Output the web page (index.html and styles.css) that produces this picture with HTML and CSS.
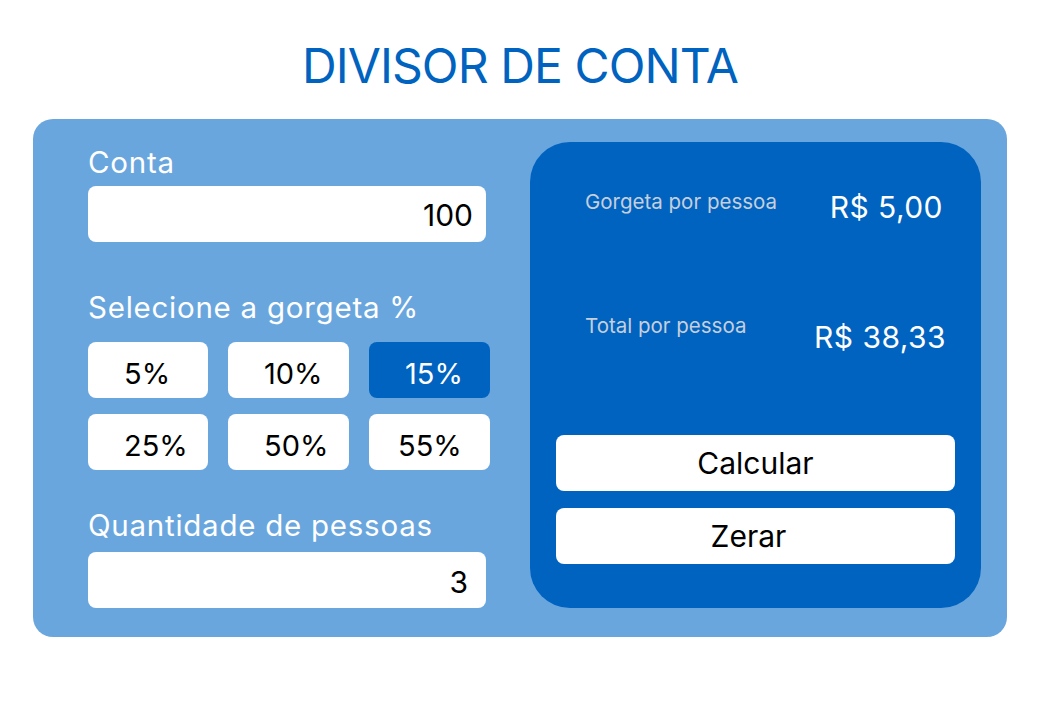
FILE: index.html
```html
<!DOCTYPE html>
<html lang="pt-BR">
<head>
<meta charset="utf-8">
<title>Divisor de Conta</title>
<link rel="stylesheet" href="styles.css">
</head>
<body>
<h1 class="title">DIVISOR DE CONTA</h1>
<main class="card">
  <section class="form">
    <label class="label label-conta">Conta</label>
    <div class="input">100</div>
    <label class="label label-tip">Selecione a gorgeta %</label>
    <div class="tips">
      <button class="tip">5%</button>
      <button class="tip">10%</button>
      <button class="tip tip-active">15%</button>
      <button class="tip">25%</button>
      <button class="tip">50%</button>
      <button class="tip tip-last">55%</button>
    </div>
    <label class="label label-people">Quantidade de pessoas</label>
    <div class="input input-people">3</div>
  </section>
  <section class="result">
    <div class="row row-tip">
      <span class="row-label">Gorgeta por pessoa</span>
      <span class="row-value">R$ 5,00</span>
    </div>
    <div class="row row-total">
      <span class="row-label">Total por pessoa</span>
      <span class="row-value">R$ 38,33</span>
    </div>
    <button class="action action-calc">Calcular</button>
    <button class="action action-reset">Zerar</button>
  </section>
</main>
</body>
</html>
```

FILE: styles.css
```css
* { box-sizing: border-box; }
html, body { margin: 0; padding: 0; background: #ffffff; }
body {
  font-family: Inter, "Noto Sans", sans-serif;
  width: 1045px;
  height: 701px;
  overflow: hidden;
}
.title {
  margin: 37px 0 0 0;
  height: 58px;
  line-height: 58px;
  font-size: 48px;
  font-weight: 400;
  letter-spacing: -0.9px;
  color: #0063c0;
  text-align: center;
  padding-right: 5px;
}
.card {
  margin: 24px 0 0 33px;
  width: 974px;
  height: 518px;
  background: #6aa6de;
  border-radius: 20px;
  padding: 23px 26px 29px 55px;
  display: flex;
  gap: 39px;
}
.form {
  width: 403px;
  display: flex;
  flex-direction: column;
  padding-top: 3px;
}
.label {
  display: block;
  color: #ffffff;
  font-size: 29.5px;
  line-height: 34px;
  height: 34px;
  letter-spacing: 0.75px;
}
.label-conta { margin-bottom: 7px; }
.label-tip { margin-top: 48px; margin-bottom: 18px; }
.label-people { margin-top: 38px; margin-bottom: 10px; }
.input {
  width: 398px;
  height: 56px;
  background: #ffffff;
  border-radius: 8px;
  text-align: right;
  padding-right: 13px;
  font-size: 30px;
  line-height: 58px;
  color: #000;
}
.input-people {
  padding-right: 18px;
  line-height: 61px;
}
.tips {
  display: grid;
  grid-template-columns: 120px 121px 121px;
  column-gap: 20px;
  row-gap: 16px;
}
.tip {
  height: 56px;
  border: none;
  border-radius: 8px;
  background: #ffffff;
  color: #000;
  font-family: inherit;
  font-size: 29px;
  text-align: left;
  padding: 4px 0 0 36px;
  line-height: 56px;
}
.tip-last { padding-left: 29px; }
.tip-active {
  background: #0063c0;
  color: #ffffff;
}
.result {
  width: 451px;
  background: #0063c0;
  border-radius: 40px;
  padding: 45px 26px 44px 26px;
  display: flex;
  flex-direction: column;
}
.row {
  display: flex;
  justify-content: space-between;
  align-items: flex-start;
  padding: 0 12px 0 29px;
}
.row-label {
  font-size: 20.5px;
  line-height: 25px;
  color: #c6cfdb;
}
.row-value {
  font-size: 30px;
  line-height: 36px;
  letter-spacing: 0.45px;
  color: #ffffff;
}
.row-tip { height: 36px; }
.row-tip .row-label { margin-top: 2px; }
.row-tip .row-value { margin-top: 2px; }
.row-total { margin-top: 90px; height: 39px; }
.row-total .row-value { margin-top: 6px; margin-right: -3px; }
.action {
  height: 56px;
  border: none;
  border-radius: 8px;
  background: #ffffff;
  color: #000;
  font-family: inherit;
  font-size: 30px;
  line-height: 56px;
  padding: 0;
  width: 399px;
}
.action-calc { margin-top: 83px; margin-bottom: 17px; }
.action-reset { padding-right: 14px; }
```
